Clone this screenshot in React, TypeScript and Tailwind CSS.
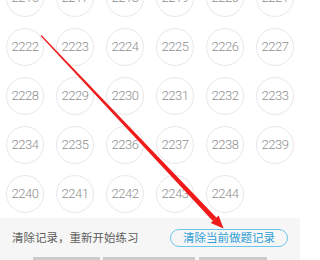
const rows = [
  ['2216', '2217', '2218', '2219', '2220', '2221'],
  ['2222', '2223', '2224', '2225', '2226', '2227'],
  ['2228', '2229', '2230', '2231', '2232', '2233'],
  ['2234', '2235', '2236', '2237', '2238', '2239'],
  ['2240', '2241', '2242', '2243', '2244'],
];

function Arrow() {
  // red annotation arrow drawn over the page
  return (
    <svg
      className="pointer-events-none absolute left-0 top-0"
      width="300"
      height="260"
      viewBox="0 0 300 260"
    >
      <polygon
        points="40.6,35.9 41.4,35.1 216.6,217.7 212.8,221"
        fill="#ef1b1b"
      />
      <polygon points="223.5,228.5 210.8,223 218.6,215.6" fill="#ef1b1b" />
    </svg>
  );
}

export default function App() {
  return (
    <div className="relative h-[260px] w-[300px] overflow-hidden bg-white font-['Roboto','Noto_Sans_CJK_SC',sans-serif]">
      <div className="-mt-[27px]">
        {rows.map((row, i) => (
          <div key={i} className="grid h-[49px] grid-cols-6">
            {row.map((n) => (
              <div key={n} className="flex items-center justify-center">
                <div className="flex h-[38px] w-[38px] items-center justify-center rounded-full border border-[#e8e8e8] text-[13px] font-light tracking-[-0.5px] text-[#8f8f8f]">
                  {n}
                </div>
              </div>
            ))}
          </div>
        ))}
      </div>

      <div className="flex h-[39px] items-center justify-between bg-[#f6f6f6] px-3 font-['Noto_Sans_CJK_SC',sans-serif]">
        <span className="text-[11.5px] text-[#5e5e5e]">清除记录，重新开始练习</span>
        <button className="flex h-[18px] w-[118px] items-center justify-center rounded-full border-[1.5px] border-[#6ec6e8] text-[11.5px] text-[#2fa0d6]">
          清除当前做题记录
        </button>
      </div>

      <div className="flex h-[3px] bg-[#f6f6f6] pl-[33px]">
        <div className="w-[67px] bg-[#cbcbcb]" />
        <div className="ml-[3px] w-[92px] bg-[#cbcbcb]" />
        <div className="ml-[4px] w-[68px] bg-[#cbcbcb]" />
      </div>

      <Arrow />
    </div>
  );
}
